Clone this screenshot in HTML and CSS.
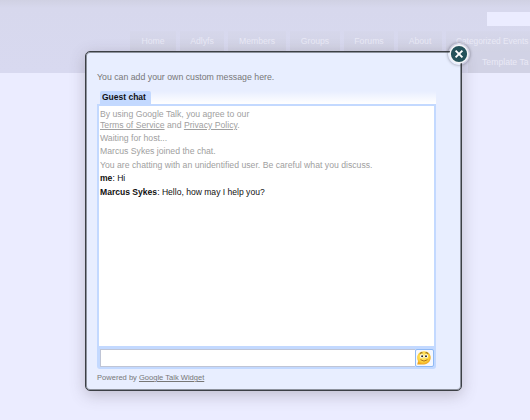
FILE: index.html
```html
<!DOCTYPE html>
<html lang="en">
<head>
<meta charset="utf-8">
<title>Guest chat</title>
<link rel="stylesheet" href="styles.css">
</head>
<body>
<header class="site-header">
  <div class="search-row"><div class="search"></div></div>
  <nav class="nav">
    <a class="home">Home</a><a class="adlyfs">Adlyfs</a><a class="members">Members</a><a class="groups">Groups</a><a class="forums">Forums</a><a class="about">About</a><a class="events">Categorized Events</a>
  </nav>
  <div class="subnav"><a>Template Ta</a></div>
</header>
<main class="dialog">
  <button class="close" aria-label="Close">
    <svg viewBox="0 0 22 22" width="22" height="22"><circle cx="11" cy="11" r="8.9" fill="#24525a" stroke="#f4f5f7" stroke-width="1.6"/><path d="M7.600 7.600l6.800 6.800M14.400 7.600l-6.800 6.800" stroke="#fff" stroke-width="1.9"/></svg>
  </button>
  <p class="message">You can add your own custom message here.</p>
  <section class="widget">
    <div class="tabs"><span class="tab">Guest chat</span></div>
    <div class="chat">
      <div class="log">
        <p class="terms">By using Google Talk, you agree to our<br><u>Terms of Service</u> and <u>Privacy Policy</u>.</p>
        <p>Waiting for host...</p>
        <p>Marcus Sykes joined the chat.</p>
        <p>You are chatting with an unidentified user. Be careful what you discuss.</p>
        <p class="said"><b>me</b>: Hi</p>
        <p class="said"><b>Marcus Sykes</b>: Hello, how may I help you?</p>
      </div>
      <div class="entry">
        <div class="input"></div>
        <div class="emoji">
          <svg viewBox="0 0 18 16" width="18" height="16"><defs><radialGradient id="face" cx=".45" cy=".4" r=".6"><stop offset="0" stop-color="#fff08a"/><stop offset=".65" stop-color="#ffd640"/><stop offset="1" stop-color="#efa51e"/></radialGradient></defs><path d="M9 1.200C13 1.200 15.700 4 15.700 7.600S13 14.400 9 14.400H2.200l.9-3.300C2.400 10 2.200 9 2.200 7.600 2.200 4 5 1.200 9 1.200z" fill="url(#face)"/><path d="M4.800 3.700Q6 2.200 7.500 2.900M10.500 2.900Q12 2.200 13.200 3.700" fill="none" stroke="#6b4310" stroke-width=".9"/><ellipse cx="6.800" cy="6.200" rx="1.700" ry="1.900" fill="#fff"/><ellipse cx="11.200" cy="6.200" rx="1.700" ry="1.900" fill="#fff"/><circle cx="7.100" cy="6.300" r="1" fill="#222"/><circle cx="11" cy="6.300" r="1" fill="#222"/><path d="M5.500 9.700Q9 12.500 12.500 9.700" fill="none" stroke="#a8620e" stroke-width=".9"/></svg>
        </div>
      </div>
    </div>
  </section>
  <footer class="powered">Powered by <u>Google Talk Widget</u></footer>
</main>
</body>
</html>
```
FILE: styles.css
```css
* { box-sizing: border-box; }
body {
  margin: 0;
  height: 420px;
  overflow: hidden;
  position: relative;
  background: #ebecff;
  font-family: "Liberation Sans", Arial, sans-serif;
  font-size: 8.69px;
}
p { margin: 0; }
.site-header {
  height: 73px;
  background: linear-gradient(#d0d1e3, #d7d8ed 8px, #d8d9f0);
  color: #e9e9f6;
  white-space: nowrap;
}
.search-row { height: 31px; padding-top: 12px; display: flex; justify-content: flex-end; }
.search { width: 43px; height: 14px; background: #ebecff; }
.nav { display: flex; gap: 4px; margin-left: 130px; height: 21px; }
.nav a { flex: none; background: linear-gradient(#d6d7eb, #d1d2e4); padding-top: 5px; text-align: center; line-height: 11px; }
.home { width: 46px; }
.adlyfs { width: 44px; }
.members { width: 58px; }
.groups { width: 50px; }
.forums { width: 50px; }
.about { width: 44px; }
.nav .events { width: 84px; padding-left: 10px; text-align: left; font-size: 8.3px; }
.subnav { margin-left: 468px; height: 21px; background: #d1d2e5; padding: 5px 0 0 14px; line-height: 11px; }
.dialog {
  position: absolute;
  left: 85px;
  top: 51px;
  width: 377px;
  height: 340px;
  padding: 20px 24px 0 11px;
  border: 1px solid #3c4045;
  border-radius: 5px;
  background: #e8eeff;
  box-shadow: inset 0 0 0 1px rgba(50, 54, 60, .5), 0 4px 15px rgba(90, 80, 90, .3);
  white-space: nowrap;
}
.close {
  position: absolute;
  top: -9px;
  right: -9px;
  width: 22px;
  height: 22px;
  padding: 0;
  border: 0;
  border-radius: 50%;
  background: none;
  box-shadow: 0 0 3px rgba(40, 40, 50, .5);
}
.close svg { display: block; }
.message { height: 19px; line-height: 11px; color: #777; font-size: 8.75px; }
.widget { width: 339px; }
.tabs { height: 13px; margin-left: 3px; background: linear-gradient(#e8eeff, #fff); }
.tab {
  display: block;
  width: 51px;
  height: 14px;
  background: #c3d9ff;
  border-radius: 2px 2px 0 0;
  font-size: 8.5px;
  font-weight: bold;
  line-height: 13px;
  padding-left: 2px;
  color: #111;
}
.chat { height: 265px; background: #c3d9ff; padding: 2px; border-radius: 0 0 3px 3px; }
.log { height: 240px; background: #fff; padding: 3px 1px; color: #a0a0a0; }
.log p { height: 13.400px; line-height: 13px; }
.log .terms { height: 23px; line-height: 11px; }
.log .said { color: #111; font-size: 8.57px; }
.entry { height: 18px; margin: 3px 0 0 1px; display: flex; }
.input { flex: 1; background: #fff; border: 1px solid #bfc5d6; border-right: 0; }
.emoji { width: 19px; border: 1px solid #8fb9f5; border-radius: 2px; background: #f5f8ff; }
.emoji svg { display: block; margin: 0 -1px; }
.powered { margin-top: 3px; font-size: 7.550px; line-height: 11px; color: #777; }
```
